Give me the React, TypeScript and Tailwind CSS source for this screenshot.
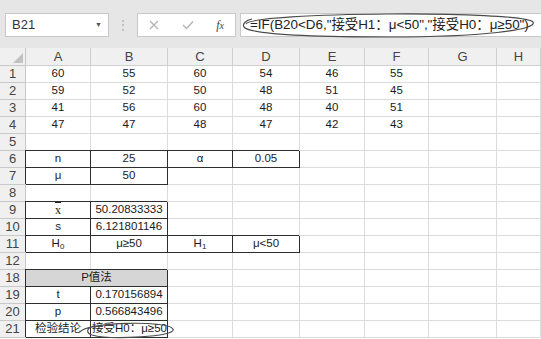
import type { ReactNode } from 'react'

const FONT = { fontFamily: '"Liberation Sans", "Noto Sans CJK SC", sans-serif' }

const COLS = ['A', 'B', 'C', 'D', 'E', 'F', 'G', 'H']

type CellDef = {
    v?: ReactNode
    box?: boolean
    left?: boolean
    span?: boolean
    fill?: boolean
}

type RowDef = { n: number; cells: CellDef[] }

const nums = (a: number[]): CellDef[] => a.map((x) => ({ v: x }))

const Xbar = () => (
    <span className="relative inline-block text-[12px]" style={{ fontFamily: '"Liberation Serif", serif' }}>
        <span className="absolute left-0 right-0 top-[1px] border-t border-[#222]" />
        x
    </span>
)

const rows: RowDef[] = [
    { n: 1, cells: nums([60, 55, 60, 54, 46, 55]) },
    { n: 2, cells: nums([59, 52, 50, 48, 51, 45]) },
    { n: 3, cells: nums([41, 56, 60, 48, 40, 51]) },
    { n: 4, cells: nums([47, 47, 48, 47, 42, 43]) },
    { n: 5, cells: [] },
    {
        n: 6,
        cells: [
            { v: 'n', box: true },
            { v: '25', box: true },
            { v: 'α', box: true },
            { v: '0.05', box: true },
        ],
    },
    { n: 7, cells: [{ v: 'μ', box: true }, { v: '50', box: true }] },
    { n: 8, cells: [] },
    { n: 9, cells: [{ v: <Xbar />, box: true }, { v: '50.20833333', box: true }] },
    { n: 10, cells: [{ v: 's', box: true }, { v: '6.121801146', box: true }] },
    {
        n: 11,
        cells: [
            { v: <span>H<sub className="text-[8px]">0</sub></span>, box: true },
            { v: 'μ≥50', box: true },
            { v: <span>H<sub className="text-[8px]">1</sub></span>, box: true },
            { v: 'μ<50', box: true },
        ],
    },
    { n: 12, cells: [] },
    { n: 18, cells: [{ v: 'P值法', box: true, span: true, fill: true }] },
    { n: 19, cells: [{ v: 't', box: true }, { v: '0.170156894', box: true }] },
    { n: 20, cells: [{ v: 'p', box: true }, { v: '0.566843496', box: true }] },
    { n: 21, cells: [{ v: '检验结论', box: true }, { v: '接受H0：μ≥50', box: true, left: true }] },
]

function Cell({ c }: { c: CellDef }) {
    const base = 'h-[17px] flex items-center text-[11.5px] text-[#1a1a1a] whitespace-nowrap overflow-visible border-r border-b'
    const edge = c.box
        ? 'border-[#2e2e2e] shadow-[-1px_-1px_0_#2e2e2e]'
        : 'border-[#dcdcdc]'
    return (
        <div
            className={`${base} ${edge} ${c.left ? 'justify-start pl-[1px]' : 'justify-center'} ${c.span ? 'col-span-2' : ''} ${c.fill ? 'bg-[#d6d6d6]' : ''}`}
        >
            {c.v}
        </div>
    )
}

function Toolbar() {
    return (
        <div className="h-[48px] bg-[#e6e6e6] flex items-start pt-[13px] pl-[5px]">
            {/* name box */}
            <div className="w-[104px] h-[24px] bg-white border border-[#c9c9c9] flex items-center justify-between pl-[6px] pr-[6px]">
                <span className="text-[13px] text-[#333]">B21</span>
                <span className="text-[7px] text-[#555]">▼</span>
            </div>
            <div className="w-[28px] h-[24px] flex items-center justify-center text-[#b0b0b0] text-[12px]">⋮</div>
            {/* cancel / enter / fx */}
            <div className="w-[99px] h-[24px] bg-white border border-[#c9c9c9] flex items-center justify-between px-[11px]">
                <svg width="10" height="10" viewBox="0 0 10 10">
                    <path d="M1 1 L9 9 M9 1 L1 9" stroke="#b4b4b4" strokeWidth="1.3" />
                </svg>
                <svg width="12" height="10" viewBox="0 0 12 10">
                    <path d="M1 5 L4.5 8.5 L11 1.5" stroke="#b4b4b4" strokeWidth="1.4" fill="none" />
                </svg>
                <span className="text-[12px] italic text-[#444]" style={{ fontFamily: '"Liberation Serif", serif' }}>
                    f<span className="text-[10px]">x</span>
                </span>
            </div>
            {/* formula */}
            <div className="ml-[4px] flex-1 h-[24px] bg-white border border-[#c9c9c9] border-r-0 flex items-center pl-[9px] text-[13.4px] text-[#222] whitespace-nowrap overflow-hidden">
                =IF(B20&lt;D6,"接受H1：μ&lt;50","接受H0：μ≥50")
            </div>
        </div>
    )
}

export default function App() {
    return (
        <div className="relative w-[541px] h-[339px] overflow-hidden bg-white" style={FONT}>
            <Toolbar />

            <div className="grid grid-cols-[26px_65px_77px_65px_67px_65px_64px_68px_1fr]">
                {/* column headers */}
                <div className="h-[18px] bg-[#f0f0f0] border-r border-b border-[#c8c8c8] flex items-end justify-end pr-[2px] pb-[2px]">
                    <svg width="10" height="10" viewBox="0 0 10 10">
                        <path d="M10 0 L10 10 L0 10 Z" fill="#c2c2c2" />
                    </svg>
                </div>
                {COLS.map((c) => (
                    <div
                        key={c}
                        className="h-[18px] bg-[#f0f0f0] border-r border-b border-[#cfcfcf] flex items-center justify-center text-[13px] text-[#444]"
                    >
                        {c}
                    </div>
                ))}

                {rows.map((r) => {
                    const used = r.cells.reduce((s, c) => s + (c.span ? 2 : 1), 0)
                    return (
                        <div key={r.n} className="contents">
                            <div className="h-[17px] bg-[#f0f0f0] border-r border-b border-[#c8c8c8] flex items-center justify-center text-[13px] text-[#444]">
                                {r.n}
                            </div>
                            {r.cells.map((c, i) => (
                                <Cell key={i} c={c} />
                            ))}
                            {Array.from({ length: COLS.length - used }).map((_, i) => (
                                <Cell key={'e' + i} c={{}} />
                            ))}
                        </div>
                    )
                })}
            </div>

            {/* hand-drawn annotation rings */}
            <svg className="absolute inset-0 pointer-events-none" width="541" height="339">
                <path
                    d="M246 24 C252 12, 522 10, 533 22 C538 30, 480 37, 390 37 C300 37, 250 34, 244 27 C242 24, 246 20, 252 19"
                    stroke="#4a4a4a"
                    strokeWidth="1.2"
                    fill="none"
                />
                <path
                    d="M80 332 C86 322, 168 320, 173 329 C177 337, 110 340, 92 335 C86 333, 86 328, 94 326"
                    stroke="#4a4a4a"
                    strokeWidth="1.2"
                    fill="none"
                />
            </svg>
        </div>
    )
}
